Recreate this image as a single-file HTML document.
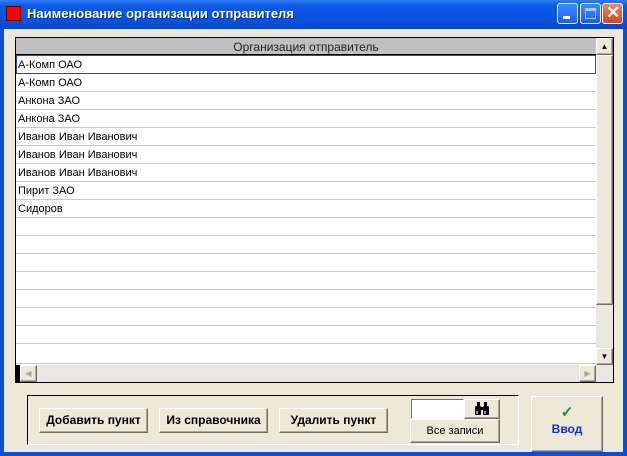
<!DOCTYPE html>
<html><head><meta charset="utf-8"><style>
*{box-sizing:border-box;margin:0;padding:0}
body{width:627px;height:456px;overflow:hidden;background:#0a4fd8;font-family:"Liberation Sans",sans-serif;position:relative}
.abs{position:absolute}
#title{left:0;top:0;width:627px;height:29px;background:linear-gradient(#2f7df5,#0a5ae6 20%,#0553e0 70%,#0846c8);}
#client{left:4px;top:29px;width:619px;height:423px;background:#ece9d8}
.tt{left:27px;top:6px;color:#fff;font-weight:bold;font-size:13px;text-shadow:1px 1px #0a2c8a}
.wb{top:3px;width:21px;height:21px;border:1px solid #fff;border-radius:3px;background:linear-gradient(#3c8cff,#1a5ff0)}
.btn{background:#ece9d8;border:1px solid;border-color:#fff #716f64 #716f64 #fff;box-shadow:inset -1px -1px #aca899;font-size:12px;text-align:center}
.row{position:absolute;left:16px;width:580px;height:18px;border-bottom:1px solid #c8c8c8;font-size:11px;line-height:19px;padding-left:2px;background:#fff}
</style></head><body>
<div id="title" class="abs"></div>
<div class="abs" style="left:6px;top:6px;width:15px;height:15px;background:#f00;border:1px solid #600"></div>
<div class="abs tt">Наименование организации отправителя</div>
<div class="abs wb" style="left:557px"><div class="abs" style="left:5px;top:12px;width:7px;height:3px;background:#fff"></div></div>
<div class="abs wb" style="left:580px"><div class="abs" style="left:4px;top:4px;width:11px;height:11px;border:1px solid #fff;border-top-width:3px;opacity:.6"></div></div>
<div class="abs wb" style="left:602px;background:linear-gradient(#e9876a,#d3431c)"><div class="abs" style="left:3px;top:-1px;color:#fff;font-weight:bold;font-size:17px">✕</div></div>
<div id="client" class="abs"></div>
<div class="abs" style="left:15px;top:37px;width:599px;height:346px;border:1px solid #000;background:#fff"></div>
<div class="abs" style="left:16px;top:38px;width:580px;height:17px;background:#c0c0c0;border-bottom:1px solid #000;font-size:12px;text-align:center;line-height:18px;color:#222">Организация отправитель</div>
<div class="row" style="top:55px;border:1px solid #2a4a9a;height:19px;line-height:18px;padding-left:1px">А-Комп ОАО</div>
<div class="row" style="top:74px">А-Комп ОАО</div>
<div class="row" style="top:92px">Анкона ЗАО</div>
<div class="row" style="top:110px">Анкона ЗАО</div>
<div class="row" style="top:128px">Иванов Иван Иванович</div>
<div class="row" style="top:146px">Иванов Иван Иванович</div>
<div class="row" style="top:164px">Иванов Иван Иванович</div>
<div class="row" style="top:182px">Пирит ЗАО</div>
<div class="row" style="top:200px">Сидоров</div>
<div class="row" style="top:218px"></div><div class="row" style="top:236px"></div><div class="row" style="top:254px"></div><div class="row" style="top:272px"></div><div class="row" style="top:290px"></div><div class="row" style="top:308px"></div><div class="row" style="top:326px"></div><div class="row" style="top:344px;height:20px"></div>
<div class="abs" style="left:596px;top:38px;width:17px;height:327px;background:#e8e8e0"></div>
<div class="abs btn" style="left:596px;top:38px;width:17px;height:17px;font-size:8px;line-height:15px">▲</div>
<div class="abs btn" style="left:596px;top:55px;width:17px;height:250px"></div>
<div class="abs btn" style="left:596px;top:348px;width:17px;height:17px;font-size:8px;line-height:15px">▼</div>
<div class="abs" style="left:16px;top:365px;width:597px;height:17px;background:#e8e8e0"></div>
<div class="abs" style="left:16px;top:365px;width:4px;height:17px;background:#000"></div>
<div class="abs btn" style="left:20px;top:365px;width:17px;height:17px;font-size:8px;line-height:15px;color:#aaa">◀</div>
<div class="abs btn" style="left:579px;top:365px;width:17px;height:17px;font-size:8px;line-height:15px;color:#aaa">▶</div>
<div class="abs" style="left:27px;top:395px;width:492px;height:50px;border:1px solid;border-color:#000 #fff #fff #000"></div>
<div class="abs btn" style="left:39px;top:408px;width:109px;height:25px;font-weight:bold;line-height:23px">Добавить пункт</div>
<div class="abs btn" style="left:159px;top:408px;width:109px;height:25px;font-weight:bold;line-height:23px">Из справочника</div>
<div class="abs btn" style="left:279px;top:408px;width:109px;height:25px;font-weight:bold;line-height:23px">Удалить пункт</div>
<div class="abs" style="left:411px;top:399px;width:53px;height:20px;background:#fff;border:1px solid;border-color:#716f64 #fff #fff #716f64"></div>
<div class="abs btn" style="left:464px;top:399px;width:36px;height:20px">
<svg width="16" height="14" viewBox="0 0 16 14" style="margin-top:2px"><rect x="3" y="0" width="3" height="4" fill="#000"/><rect x="10" y="0" width="3" height="4" fill="#000"/><rect x="1" y="4" width="6" height="9" rx="1" fill="#000"/><rect x="9" y="4" width="6" height="9" rx="1" fill="#000"/><rect x="6" y="5" width="4" height="3" fill="#000"/><rect x="2" y="9" width="2" height="3" fill="#888"/><rect x="10" y="9" width="2" height="3" fill="#888"/></svg></div>
<div class="abs btn" style="left:410px;top:419px;width:90px;height:24px;font-size:11px;line-height:22px">Все записи</div>
<div class="abs btn" style="left:531px;top:396px;width:72px;height:56px"><div style="color:#1a9a1a;font-size:15px;font-weight:bold;margin-top:6px">✓</div><div style="color:#1a2ad0;font-weight:bold;font-size:12px;margin-top:1px">Ввод</div></div>
</body></html>
